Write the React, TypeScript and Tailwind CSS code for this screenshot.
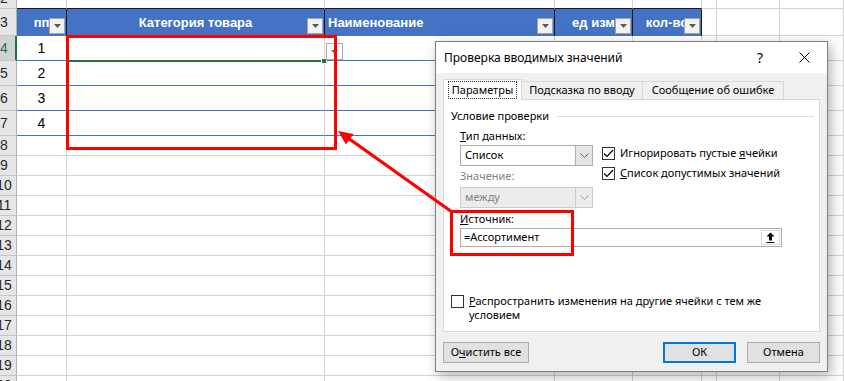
import React from 'react';

const COLS = ['w-[50px]', 'w-[258px]', 'w-[230px]', 'w-[78px]', 'w-[69px]', 'w-[15px]', 'w-[63px]', 'flex-1'];

const HEAD = [
  { t: 'пп', cls: 'justify-center' },
  { t: 'Категория товара', cls: 'justify-center' },
  { t: 'Наименование', cls: 'justify-start pl-[3px]' },
  { t: 'ед изм', cls: 'justify-center' },
  { t: 'кол-во', cls: 'justify-center' },
];

function RowHead({ n, active = false }: { n: number; active?: boolean }) {
  return (
    <div
      className={`relative w-[17px] shrink-0 overflow-hidden border-b border-b-[#c6c6c6] ${
        active ? 'border-r-2 border-r-[#217346] bg-[#d2d2d2] text-[#217346]' : 'border-r border-r-[#b1b1b1] bg-[#e6e6e6] text-[#262626]'
      }`}
    >
      <span className="absolute inset-y-0 left-[-8px] flex w-[24px] items-center justify-center">{n}</span>
    </div>
  );
}

function PlainRow({ n, h, dark = false }: { n: number; h: string; dark?: boolean }) {
  return (
    <div className={`flex ${h}`}>
      <RowHead n={n} />
      {COLS.map((w, i) => (
        <div
          key={i}
          className={`${w} shrink-0 border-r border-b border-r-[#d4d4d4] ${dark && i < 5 ? 'border-b-[#1a1a1a]' : 'border-b-[#d4d4d4]'}`}
        />
      ))}
    </div>
  );
}

function FilterBtn() {
  return (
    <div className="absolute right-[1px] bottom-[2px] flex h-[16px] w-[16px] items-center justify-center border border-[#a3a3a3] bg-[#f2f2f2]">
      <svg width="7" height="4" viewBox="0 0 7 4">
        <path d="M0 0h7L3.5 4z" fill="#595959" />
      </svg>
    </div>
  );
}

function HeaderRow() {
  return (
    <div className="flex h-[27px]">
      <RowHead n={3} />
      {COLS.map((w, i) =>
        i < 5 ? (
          <div
            key={i}
            className={`${w} relative flex shrink-0 items-center border-r border-r-[#1a1a1a] bg-[#4472c4] text-[13px] font-bold text-white ${HEAD[i].cls}`}
          >
            <span className="whitespace-nowrap">{HEAD[i].t}</span>
            <FilterBtn />
          </div>
        ) : (
          <div key={i} className={`${w} shrink-0 border-r border-b border-[#d4d4d4]`} />
        ),
      )}
    </div>
  );
}

function DataRow({ n, active = false }: { n: number; active?: boolean }) {
  return (
    <div className="flex h-[25px]">
      <RowHead n={n} active={active} />
      {COLS.map((w, i) => (
        <div
          key={i}
          className={`${w} flex shrink-0 items-center justify-center border-r border-b border-r-[#d4d4d4] ${
            i < 5 ? 'border-b-[#4472c4]' : 'border-b-[#d4d4d4]'
          }`}
        >
          {i === 0 ? n - 3 : null}
        </div>
      ))}
    </div>
  );
}

function Check({ checked = false }: { checked?: boolean }) {
  return (
    <span className="flex h-[13px] w-[13px] shrink-0 items-center justify-center border border-[#333333] bg-white">
      {checked && (
        <svg width="11" height="9" viewBox="0 0 11 9">
          <path d="M1 4.5l3 3L10 1" fill="none" stroke="#000" strokeWidth="1.2" />
        </svg>
      )}
    </span>
  );
}

function Chevron({ color }: { color: string }) {
  return (
    <svg width="9" height="5" viewBox="0 0 9 5">
      <path d="M0.5 0.5l4 4 4-4" fill="none" stroke={color} strokeWidth="1" />
    </svg>
  );
}

function Combo({ value, disabled = false }: { value: string; disabled?: boolean }) {
  return (
    <div
      className={`flex h-[21px] w-[133px] border ${
        disabled ? 'border-[#cccccc] bg-[#ececec] text-[#838383]' : 'border-[#adadad] bg-white'
      }`}
    >
      <span className="flex flex-1 items-center pl-[4px]">{value}</span>
      <span
        className={`flex w-[17px] items-center justify-center border-l ${
          disabled ? 'border-[#cccccc] bg-[#ececec]' : 'border-[#adadad] bg-[#e5e5e5]'
        }`}
      >
        <Chevron color={disabled ? '#9a9a9a' : '#606060'} />
      </span>
    </div>
  );
}

function Btn({ children, w, primary = false }: { children: React.ReactNode; w: string; primary?: boolean }) {
  return (
    <div
      className={`flex h-[21px] ${w} items-center justify-center bg-[#e1e1e1] ${
        primary ? 'border-2 border-[#0078d7]' : 'border border-[#adadad]'
      }`}
    >
      {children}
    </div>
  );
}

function Dialog() {
  return (
    <div className="absolute top-[41px] left-[435px] flex h-[331px] w-[393px] flex-col border border-[#7f7f7f] bg-[#f0f0f0] font-['Noto_Sans',sans-serif] text-[11px] text-black shadow-[3px_4px_12px_rgba(0,0,0,0.3)]">
      <div className="flex h-[31px] shrink-0 items-center bg-white pl-[8px] text-[12px]">
        <span className="flex-1">Проверка вводимых значений</span>
        <span className="mr-[36px] text-[14px]">?</span>
        <svg className="mr-[17px]" width="11" height="11" viewBox="0 0 11 11">
          <path d="M0.5 0.5l10 10M10.5 0.5l-10 10" stroke="#000" strokeWidth="1" />
        </svg>
      </div>
      <div className="flex flex-1 flex-col px-[7px] pt-[6px] pb-[8px]">
        <div className="relative z-10 flex h-[20px] items-end">
          <div className="mb-[-1px] flex h-[21px] w-[79px] items-center justify-center border-x border-t border-[#d9d9d9] bg-white">
            <span className="border border-dotted border-[#333] px-[3px] leading-[16px]">Параметры</span>
          </div>
          <div className="flex h-[18px] w-[121px] items-center justify-center border-t border-r border-[#d9d9d9] bg-[#f0f0f0]">
            Подсказка по вводу
          </div>
          <div className="flex h-[18px] w-[141px] items-center justify-center border-t border-r border-[#d9d9d9] bg-[#f0f0f0]">
            Сообщение об ошибке
          </div>
        </div>
        <div className="flex h-[233px] flex-col border border-[#d9d9d9] bg-white pl-[7px]">
          <div className="mt-[8px] mr-[5px] flex h-[16px] items-center">
            <span>Условие проверки</span>
            <span className="ml-[8px] h-px flex-1 bg-[#dcdcdc]" />
          </div>
          <div className="mt-[4px] flex pl-[9px]">
            <div className="flex w-[133px] flex-col">
              <span className="h-[16px] leading-[16px]">
                <u>Т</u>ип данных:
              </span>
              <div className="mt-[1px]">
                <Combo value="Список" />
              </div>
              <span className="mt-[2px] h-[16px] leading-[16px] text-[#838383]">Значение:</span>
              <div className="mt-[3px]">
                <Combo value="между" disabled />
              </div>
            </div>
            <div className="mt-[15px] ml-[9px] flex flex-col">
              <div className="flex h-[20px] items-center gap-[5px]">
                <Check checked />
                <span>
                  Игнорировать пустые <u>я</u>чейки
                </span>
              </div>
              <div className="flex h-[20px] items-center gap-[5px]">
                <Check checked />
                <span>
                  <u>С</u>писок допустимых значений
                </span>
              </div>
            </div>
          </div>
          <span className="mt-[3px] h-[16px] pl-[9px] leading-[16px]">
            <u>И</u>сточник:
          </span>
          <div className="mt-[1px] ml-[9px] flex h-[19px] w-[322px] border border-[#adadad] bg-white">
            <span className="flex flex-1 items-center pl-[3px]">=Ассортимент</span>
            <span className="m-[1px] flex w-[19px] items-center justify-center border border-[#dcdcdc] bg-white">
              <svg width="9" height="11" viewBox="0 0 9 11">
                <path d="M4.5 0.5L0.5 4.5h2.5v4h3v-4h2.5z" fill="#000" />
                <path d="M0.5 10.5h8" stroke="#000" strokeWidth="1" />
              </svg>
            </span>
          </div>
          <div className="mt-[47px] flex gap-[5px]">
            <div className="pt-[1px]">
              <Check />
            </div>
            <span className="leading-[14px]">
              <u>Р</u>аспространить изменения на другие ячейки с тем же
              <br />
              условием
            </span>
          </div>
        </div>
        <div className="mt-[10px] flex items-center">
          <Btn w="w-[86px]">
            <span>
              О<u>ч</u>истить все
            </span>
          </Btn>
          <div className="flex-1" />
          <Btn w="w-[73px]" primary>
            ОК
          </Btn>
          <div className="w-[11px]" />
          <Btn w="w-[73px]">Отмена</Btn>
        </div>
      </div>
    </div>
  );
}

function Marks() {
  return (
    <>
      <div className="absolute top-[35px] left-[66px] h-[115px] w-[271px] border-[3px] border-[#ff0000]" />
      <div className="absolute top-[210px] left-[450px] h-[46px] w-[124px] border-[3px] border-[#ff0000]" />
      <svg className="absolute top-0 left-0" width="844" height="381" viewBox="0 0 844 381">
        <path d="M452 212L348 138" stroke="#ff0000" strokeWidth="3.2" />
        <path d="M338 131L346 144.5L353.5 134z" fill="#ff0000" />
      </svg>
    </>
  );
}

export default function App() {
  return (
    <div className="relative h-[381px] w-[844px] overflow-hidden bg-white font-['Liberation_Sans',sans-serif] text-[14px] text-black">
      <div className="mt-[-11px] flex flex-col">
        <PlainRow n={2} h="h-[20px]" dark />
        <HeaderRow />
        <DataRow n={4} active />
        <DataRow n={5} />
        <DataRow n={6} />
        <DataRow n={7} />
        {[8, 9, 10, 11, 12, 13, 14, 15, 16, 17, 18, 19, 20].map((n) => (
          <PlainRow key={n} n={n} h="h-[20px]" />
        ))}
      </div>

      {/* active cell B4 */}
      <div className="absolute top-[60px] left-[67px] h-[2px] w-[258px] bg-[#217346]" />
      <div className="absolute top-[58px] left-[321px] h-[6px] w-[6px] border border-white bg-[#217346]" />
      <div className="absolute top-[43px] left-[326px] flex h-[17px] w-[17px] items-center justify-center border border-[#ababab] bg-white">
        <svg width="7" height="4" viewBox="0 0 7 4">
          <path d="M0 0h7L3.5 4z" fill="#6a6a6a" />
        </svg>
      </div>

      <Dialog />
      <Marks />
    </div>
  );
}
